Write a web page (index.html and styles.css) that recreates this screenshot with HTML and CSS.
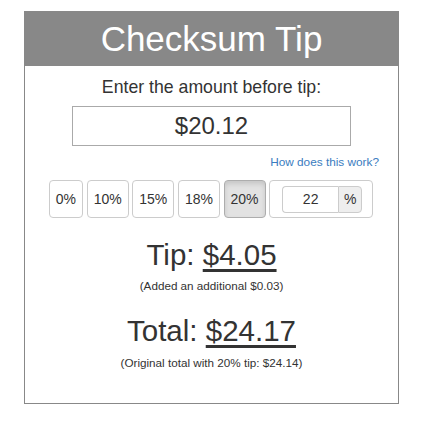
FILE: index.html
```html
<!DOCTYPE html>
<html>
<head>
<meta charset="utf-8">
<title>Checksum Tip</title>
<link rel="stylesheet" href="styles.css">
</head>
<body>
<div class="app">
  <div class="header">Checksum Tip</div>
  <div class="prompt">Enter the amount before tip:</div>
  <div class="amount"><input class="amount-input" type="text" value="$20.12"></div>
  <div class="help"><a href="#">How does this work?</a></div>
  <div class="tips">
    <button class="tip-btn">0%</button>
    <button class="tip-btn">10%</button>
    <button class="tip-btn">15%</button>
    <button class="tip-btn">18%</button>
    <button class="tip-btn active">20%</button>
    <div class="custom">
      <div class="custom-group">
        <input class="custom-input" type="text" value="22">
        <span class="addon">%</span>
      </div>
    </div>
  </div>
  <div class="result">Tip: <span class="value">$4.05</span></div>
  <div class="note">(Added an additional $0.03)</div>
  <div class="result total">Total: <span class="value">$24.17</span></div>
  <div class="note last">(Original total with 20% tip: $24.14)</div>
</div>
</body>
</html>
```
FILE: styles.css
```css
html, body {
  margin: 0;
  padding: 0;
  background: #fff;
}
.app {
  width: 373px;
  margin: 11px 0 0 24px;
  border: 1px solid #888;
  border-top: 0;
  font-family: "Liberation Sans", Arial, sans-serif;
  color: #333;
  padding-bottom: 33px;
}
.header {
  background: #888;
  color: #fff;
  text-align: center;
  font-size: 35px;
  line-height: 55px;
  height: 55px;
  margin: 0 -1px;
}
.prompt {
  font-size: 17.7px;
  line-height: 20px;
  text-align: center;
  margin-top: 11px;
}
.amount {
  display: flex;
  justify-content: center;
  margin-top: 9px;
}
.amount-input {
  box-sizing: border-box;
  width: 279px;
  height: 40px;
  border: 1px solid #aaa;
  font-family: inherit;
  font-size: 24px;
  color: #333;
  text-align: center;
  padding: 0;
  outline: none;
}
.help {
  text-align: right;
  font-size: 11.8px;
  line-height: 14px;
  margin-top: 9px;
  padding-right: 19px;
}
.help a {
  color: #3a7cc0;
  text-decoration: none;
}
.tips {
  display: flex;
  justify-content: center;
  gap: 3.6px;
  margin-top: 11px;
  margin-right: 1px;
}
.tip-btn {
  box-sizing: border-box;
  height: 38px;
  padding: 0 6px;
  border: 1px solid #ccc;
  border-radius: 4px;
  background: #fff;
  font-family: inherit;
  font-size: 14px;
  color: #333;
}
.tip-btn.active {
  background: #e2e2e2;
  border-color: #adadad;
  box-shadow: inset 0 3px 5px rgba(0,0,0,0.125);
}
.custom {
  box-sizing: border-box;
  width: 104px;
  height: 38px;
  border: 1px solid #ccc;
  border-radius: 4px;
  display: flex;
  align-items: center;
  justify-content: center;
}
.custom-group {
  display: flex;
  height: 27px;
  width: 80px;
  margin-left: 2px;
}
.custom-input {
  box-sizing: border-box;
  width: 56px;
  height: 27px;
  border: 1px solid #ccc;
  border-right: 0;
  border-radius: 4px 0 0 4px;
  font-family: inherit;
  font-size: 14px;
  color: #333;
  text-align: center;
  padding: 0;
  outline: none;
}
.addon {
  box-sizing: border-box;
  width: 24px;
  height: 27px;
  border: 1px solid #ccc;
  border-radius: 0 4px 4px 0;
  background: #eee;
  font-size: 14px;
  line-height: 25px;
  text-align: center;
}
.result {
  text-align: center;
  font-size: 29.5px;
  line-height: 34px;
  margin-top: 20px;
}
.result.total {
  margin-top: 21px;
}
.value {
  text-decoration: underline;
  text-decoration-thickness: 3px;
  text-underline-offset: 4px;
}
.note {
  text-align: center;
  font-size: 11.7px;
  line-height: 14px;
  margin-top: 7px;
}
.note.last {
  margin-top: 8px;
}
```
